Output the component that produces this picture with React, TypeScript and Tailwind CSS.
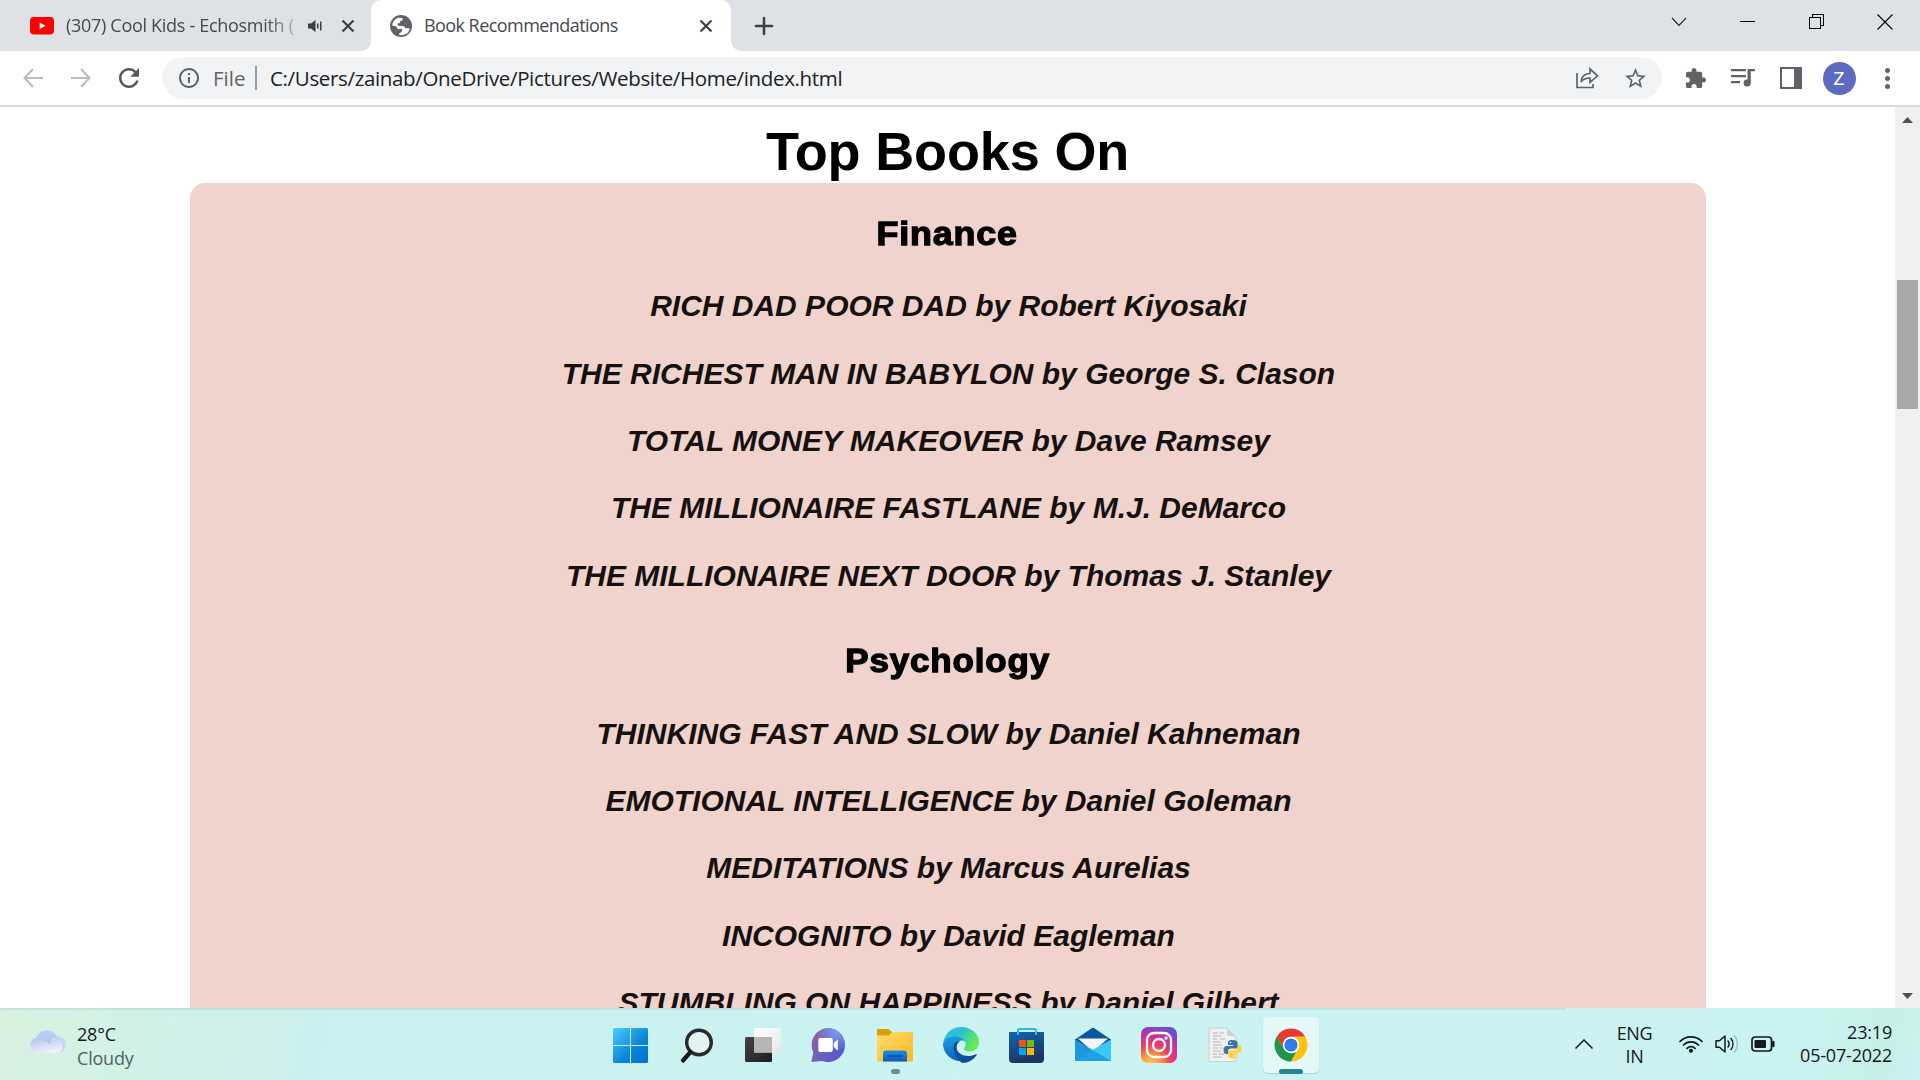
import React from "react";

const finance = [
  "RICH DAD POOR DAD by Robert Kiyosaki",
  "THE RICHEST MAN IN BABYLON by George S. Clason",
  "TOTAL MONEY MAKEOVER by Dave Ramsey",
  "THE MILLIONAIRE FASTLANE by M.J. DeMarco",
  "THE MILLIONAIRE NEXT DOOR by Thomas J. Stanley",
];
const psychology = [
  "THINKING FAST AND SLOW by Daniel Kahneman",
  "EMOTIONAL INTELLIGENCE by Daniel Goleman",
  "MEDITATIONS by Marcus Aurelias",
  "INCOGNITO by David Eagleman",
  "STUMBLING ON HAPPINESS by Daniel Gilbert",
];

function Cell({ children }: { children: React.ReactNode }) {
  return <div className="flex h-full w-12 shrink-0 items-center justify-center">{children}</div>;
}

function Material({ d, size = 27, color = "#5f6368" }: { d: string; size?: number; color?: string }) {
  return (
    <svg width={size} height={size} viewBox="0 0 24 24" fill={color} className="shrink-0">
      <path d={d} />
    </svg>
  );
}

function TabClose() {
  return (
    <svg width="14" height="14" viewBox="0 0 14 14" stroke="#3c4043" strokeWidth="2.2" className="shrink-0">
      <path d="M1.5 1.5l11 11M12.5 1.5l-11 11" />
    </svg>
  );
}

function TabStrip() {
  return (
    <div className="flex h-[51px] shrink-0 bg-[#dee1e6] text-[18px] text-[#45494d]">
      <div className="flex w-[371px] items-center pl-[30px]">
        <svg width="24" height="18" viewBox="0 0 24 18" className="shrink-0">
          <rect width="24" height="17.5" rx="4" fill="#f00" />
          <path d="M9.7 5.5v6.4l5.8-3.2z" fill="#fff" />
        </svg>
        <div className="ml-3 w-[232px] whitespace-nowrap tracking-[-0.3px] [mask-image:linear-gradient(to_right,black_85%,transparent_105%)]">
          (307) Cool Kids - Echosmith (
        </div>
        <svg width="16" height="14" viewBox="0 0 16 14" className="ml-[9px] shrink-0" fill="#3c4043">
          <path d="M1 4.5h3L8.5 1v12L4 9.5H1z" />
          <rect x="10" y="4.5" width="1.5" height="5" />
          <rect x="13" y="2.5" width="1.5" height="9" />
        </svg>
        <div className="ml-[18px] flex">
          <TabClose />
        </div>
      </div>
      <div className="relative flex w-[360px] items-center rounded-t-[10px] bg-white pl-[19px]">
        <div className="absolute bottom-0 -left-[10px] h-[10px] w-[10px] bg-[radial-gradient(circle_at_0_0,transparent_9.5px,white_10px)]" />
        <div className="absolute -right-[10px] bottom-0 h-[10px] w-[10px] bg-[radial-gradient(circle_at_100%_0,transparent_9.5px,white_10px)]" />
        <svg width="22" height="22" viewBox="2 2 20 20" className="shrink-0">
          <circle cx="12" cy="12" r="10" fill="#5f6368" />
          <path d="M4 11.5c.2-3.3 2.3-6 5.3-7.1l4 .3v2.2c-1.7 0-2.5 1-2.5 2.5h-2c0 1.5.5 2.5 1.8 2.5h3.2c1.6 0 2.2 1 2.2 2.2h4c-.4 3.3-3 5.9-6.5 6.100l-3 .1v-2c1.500 0 2.500-1 2.500-2.700v-.8H10c-1.200 0-2-.9-2-2.300z" fill="#fff" />
          <path d="M10.8 9.400h2.700V7.200c1.500 0 2.500-.8 2.700-2l2 1.500 1.600 3.600.2 3.500h-4c0-1.500-1-2.300-2.200-2.300h-2.200z" fill="#5f6368" />
        </svg>
        <span className="ml-[12px] w-[275px] whitespace-nowrap tracking-[-0.56px]">Book Recommendations</span>
        <TabClose />
      </div>
      <div className="ml-[23px] flex items-center">
        <svg width="20" height="20" viewBox="0 0 20 20" stroke="#3c4043" strokeWidth="2.6" strokeLinecap="round">
          <path d="M10 2v16M2 10h16" />
        </svg>
      </div>
      <div className="mb-[8px] ml-auto flex items-center">
        <div className="flex w-[68px] justify-center">
          <svg width="16" height="10" viewBox="0 0 16 10" fill="none" stroke="#222" strokeWidth="1.1">
            <path d="M1 1l7 7.500L15 1" />
          </svg>
        </div>
        <div className="flex w-[69px] justify-center">
          <div className="h-px w-[15px] bg-black" />
        </div>
        <div className="flex w-[69px] justify-center">
          <svg width="16" height="16" viewBox="0 0 16 16" fill="none" stroke="#000" shapeRendering="crispEdges">
            <path d="M.5 3.500h11v11h-11zM3.500 3.500v-3h11v11h-3" />
          </svg>
        </div>
        <div className="flex w-[69px] justify-center pr-px">
          <svg width="16" height="16" viewBox="0 0 16 16" stroke="#000" strokeWidth="1.1">
            <path d="M.5.5l15 15M15.500.5l-15 15" />
          </svg>
        </div>
      </div>
    </div>
  );
}

function Toolbar() {
  return (
    <div className="flex h-[56px] shrink-0 items-center border-b-2 border-[#dadbdc] bg-white pl-[9px]">
      <Cell>
        <svg width="20" height="20" viewBox="0 0 20 20" fill="none" stroke="#babcbe" strokeWidth="2.1">
          <path d="M20 10H1.500M10 1L1.500 10 10 19" />
        </svg>
      </Cell>
      <Cell>
        <svg width="20" height="20" viewBox="0 0 20 20" fill="none" stroke="#babcbe" strokeWidth="2.1">
          <path d="M0 10h18.500M10 1l8.500 9-8.500 9" />
        </svg>
      </Cell>
      <Cell>
        <Material
          color="#54585c"
          size={30}
          d="M17.650 6.350C16.200 4.900 14.210 4 12 4c-4.420 0-7.990 3.580-7.990 8s3.570 8 7.990 8c3.730 0 6.840-2.550 7.730-6h-2.080c-.820 2.330-3.040 4-5.650 4-3.310 0-6-2.690-6-6s2.690-6 6-6c1.660 0 3.140.690 4.220 1.780L13 11h7V4l-2.350 2.350z"
        />
      </Cell>
      <div className="ml-[9px] flex h-[42px] w-[1500px] items-center rounded-full bg-[#f1f3f4] pr-[3px] pl-[15px] text-[20.5px]">
        <Material
          size={24}
          d="M11 7h2v2h-2zm0 4h2v6h-2zm1-9C6.480 2 2 6.480 2 12s4.480 10 10 10 10-4.480 10-10S17.520 2 12 2zm0 18c-4.410 0-8-3.590-8-8s3.590-8 8-8 8 3.590 8 8-3.590 8-8 8z"
        />
        <span className="ml-[12px] w-[42px] text-[#5f6368]">File</span>
        <div className="h-6 w-[2px] bg-[#9a9da0]" />
        <span className="ml-[13px] whitespace-nowrap tracking-[-0.34px] text-[#202124]">
          C:/Users/zainab/OneDrive/Pictures/Website/Home/index.html
        </span>
        <div className="ml-auto flex">
          <Cell>
            <svg width="24" height="24" viewBox="0 0 24 24" fill="none" stroke="#5f6368" strokeWidth="1.7">
              <path d="M2 7v14.500h16V18" />
              <path d="M6 16c.5-5.500 4-8.500 9-8.500V3l7.500 6.800-7.500 6.500V12c-4 0-7 1-9 4z" />
            </svg>
          </Cell>
          <Cell>
            <Material
              size={25}
              d="M22 9.240l-7.190-.620L12 2 9.190 8.630 2 9.240l5.460 4.730L5.820 21 12 17.270 18.180 21l-1.630-7.030L22 9.240zM12 15.400l-3.760 2.270 1-4.280-3.320-2.880 4.380-.380L12 6.100l1.710 4.040 4.380.380-3.320 2.880 1 4.280L12 15.400z"
            />
          </Cell>
        </div>
      </div>
      <div className="ml-[9px] flex items-center">
        <Cell>
          <Material
            size={23}
            d="M20.500 11H19V7c0-1.100-.9-2-2-2h-4V3.500C13 2.120 11.880 1 10.500 1S8 2.120 8 3.500V5H4c-1.100 0-1.990.9-1.990 2v3.800H3.500c1.490 0 2.700 1.210 2.700 2.700s-1.210 2.700-2.700 2.700H2V20c0 1.100.9 2 2 2h3.800v-1.500c0-1.490 1.210-2.700 2.700-2.700s2.700 1.210 2.700 2.700V22H17c1.100 0 2-.9 2-2v-4h1.500c1.380 0 2.500-1.120 2.500-2.500S21.880 11 20.500 11z"
          />
        </Cell>
        <Cell>
          <svg width="24" height="20" viewBox="0 0 24 20" fill="#5f6368">
            <path d="M0 1h15v2.200H0zM0 7h15v2.200H0zM0 13h9v2.200H0zM16.500 1H24v2.200h-4.200V15a3.600 3.600 0 1 1-3.300-3.600z" />
          </svg>
        </Cell>
        <Cell>
          <div className="flex h-[22px] w-[22px] justify-end border-[2.5px] border-[#5f6368]">
            <div className="w-[6px] bg-[#5f6368]" />
          </div>
        </Cell>
        <Cell>
          <div className="flex h-[33px] w-[33px] items-center justify-center rounded-full bg-[#5c6bc0] font-[Roboto] text-[19px] leading-none text-white">
            Z
          </div>
        </Cell>
        <Cell>
          <div className="flex flex-col gap-[3px]">
            <div className="h-[5px] w-[5px] rounded-full bg-[#5f6368]" />
            <div className="h-[5px] w-[5px] rounded-full bg-[#5f6368]" />
            <div className="h-[5px] w-[5px] rounded-full bg-[#5f6368]" />
          </div>
        </Cell>
      </div>
    </div>
  );
}

function Section({ title, titleClass, books }: { title: string; titleClass: string; books: string[] }) {
  return (
    <section className="w-full">
      <div className="flex h-[89.7px] items-end justify-center pb-[19px]">
        <h2 className={`${titleClass} text-[33px] leading-10 font-bold tracking-[0.8px] text-black [-webkit-text-stroke:1.3px_black]`}>
          {title}
        </h2>
      </div>
      {books.map((b) => (
        <div key={b} className="flex h-[67.3px] items-center justify-center pl-[2px]">
          <p className="text-[30px] leading-[34px] font-bold whitespace-nowrap text-[#16110f] italic">{b}</p>
        </div>
      ))}
    </section>
  );
}

function Page() {
  return (
    <div className="flex min-h-0 flex-1 bg-white">
      <main className="flex min-w-0 flex-1 flex-col items-center overflow-hidden pt-[14px] font-['Liberation_Sans',Arial,sans-serif]">
        <h1 className="h-[62px] shrink-0 text-[54px] leading-[60px] font-bold tracking-[-0.15px] text-black">Top Books On</h1>
        <div className="flex w-[1516px] shrink-0 flex-col gap-[1.2px] rounded-[15px] bg-[#f0d3cd]">
          <Section title="Finance" titleClass="scale-x-[1.085]" books={finance} />
          <Section title="Psychology" titleClass="scale-x-[1.06]" books={psychology} />
        </div>
      </main>
      <div className="flex w-[25px] shrink-0 flex-col items-center bg-[#f0f0f0] pt-[10px] pb-[9px]">
        <svg width="11" height="6" viewBox="0 0 11 6" fill="#505050">
          <path d="M5.500 0L11 6H0z" />
        </svg>
        <div className="mt-[157px] h-[129px] w-[21px] bg-[#a8a8a8]" />
        <svg width="11" height="6" viewBox="0 0 11 6" fill="#505050" className="mt-auto">
          <path d="M5.500 6L0 0h11z" />
        </svg>
      </div>
    </div>
  );
}

function AppIcon({ children }: { children: React.ReactNode }) {
  return (
    <svg width="36" height="36" viewBox="0 0 36 36" className="overflow-visible">
      {children}
    </svg>
  );
}

function Stops({ id, from, to, mid, x2 = 1, y2 = 1 }: { id: string; from: string; to: string; mid?: string; x2?: number; y2?: number }) {
  return (
    <linearGradient id={id} x1="0" y1="0" x2={x2} y2={y2}>
      <stop offset="0" stopColor={from} />
      {mid && <stop offset=".5" stopColor={mid} />}
      <stop offset="1" stopColor={to} />
    </linearGradient>
  );
}

const icons: React.ReactNode[] = [
  <AppIcon key="start">
    <defs>
      <linearGradient id="win" gradientUnits="userSpaceOnUse" x1="0" y1="0" x2="36" y2="36">
        <stop offset="0" stopColor="#4cd0ff" />
        <stop offset=".6" stopColor="#0a84d8" />
        <stop offset="1" stopColor="#0070d0" />
      </linearGradient>
    </defs>
    <path fill="url(#win)" d="M1.500 1H17v17H0V2.500A1.500 1.500 0 0 1 1.500 1zM18 1h15.500A1.500 1.500 0 0 1 35 2.500V18H18zM0 19h17v17H1.500A1.500 1.500 0 0 1 0 34.500zM18 19h17v15.500a1.500 1.500 0 0 1-1.500 1.500H18z" />
  </AppIcon>,
  <AppIcon key="search">
    <circle cx="20" cy="15.500" r="12.300" fill="#e0f4f4" stroke="#2b2a2a" strokeWidth="3.400" />
    <path d="M11.500 25L4 33.500" stroke="#1c1b1b" strokeWidth="4.200" strokeLinecap="round" />
  </AppIcon>,
  <AppIcon key="tasks">
    <defs>
      <Stops id="tv" from="#444" to="#1d1d1d" />
      <Stops id="tw" from="#fff" to="#e4e6e6" />
    </defs>
    <rect y="10" width="27" height="25" rx="1.500" fill="url(#tv)" />
    <rect x="9" y="1" width="27" height="24.500" rx="1" fill="url(#tw)" />
    <path d="M9 10h18v15.500H9z" fill="#b5b5b5" />
  </AppIcon>,
  <AppIcon key="chat">
    <defs>
      <linearGradient id="chat" x1="0" y1=".3" x2="1" y2=".7">
        <stop offset="0" stopColor="#94629f" />
        <stop offset=".5" stopColor="#655dc1" />
        <stop offset="1" stopColor="#5558cc" />
      </linearGradient>
      <radialGradient id="chath" cx=".75" cy=".1" r=".6">
        <stop offset="0" stopColor="#7aa0ee" />
        <stop offset="1" stopColor="#7aa0ee" stopOpacity="0" />
      </radialGradient>
    </defs>
    <g transform="translate(-.7 0)">
      <path d="M18 1a17 17 0 1 1-6 33L1 35l2-9.500A17 17 0 0 1 18 1z" fill="url(#chat)" />
      <path d="M18 1a17 17 0 1 1-6 33L1 35l2-9.500A17 17 0 0 1 18 1z" fill="url(#chath)" />
      <rect x="8" y="11" width="14.500" height="14" rx="2" fill="#fff" />
      <path d="M23.500 16l4-3.500v11l-4-3.500z" fill="#fff" />
    </g>
  </AppIcon>,
  <AppIcon key="files">
    <defs>
      <Stops id="fold" from="#ffdc6f" to="#fcb91a" />
      <Stops id="tray" from="#1b8fe0" to="#0a5cba" x2={0} />
    </defs>
    <path d="M1 2h10.500l3.500 3h20a1 1 0 0 1 1 1v5H0V3a1 1 0 0 1 1-1z" fill="#de9c08" />
    <path d="M0 8.500h11.500L15 5h20a1 1 0 0 1 1 1v27.500a1 1 0 0 1-1 1H1a1 1 0 0 1-1-1z" fill="url(#fold)" />
    <path d="M6 34.500v-8a3 3 0 0 1 3-3h18a3 3 0 0 1 3 3v8z" fill="url(#tray)" />
    <path d="M11 29h14" stroke="#0a4a94" strokeWidth="1.500" strokeLinecap="round" />
  </AppIcon>,
  <AppIcon key="edge">
    <defs>
      <Stops id="e1" from="#35b8ef" mid="#2bc3c9" to="#66eb50" y2={0.5} />
      <Stops id="e2" from="#1a9fe0" to="#0b63c4" x2={0} />
    </defs>
    <path d="M0 17C1 7 8.500 0 18 0c10.500 0 18 7 18 15 0 6-4.500 9.500-9.500 9.500-3.500 0-5.500-1.200-5.500-2.700 0-1.200 1.700-1.900 1.700-4.600C22.700 12.700 18 9 11.500 9 6 9 1.500 12.500 0 17z" fill="url(#e1)" />
    <path d="M0 18.500C0 13 5 9 11.500 9 17 9 21 11.500 22.300 15c-1.500-1.500-3.600-1.800-5.300-1-2 1-3.500 3.500-3.500 6.500 0 6.500 5 12 13 11.500A18 18 0 0 1 0 18.500z" fill="url(#e2)" />
    <path d="M11 17c-2 6 1 13.500 8 18.900 5.500.3 11-2.300 14.700-7.900.3-.6-.2-1.200-.9-.8C25.500 31 14 28.500 13.500 20.500c0-2.700 1.300-5 3-6.300-2.500-.2-4.500.8-5.500 2.800z" fill="#0d4f98" />
  </AppIcon>,
  <AppIcon key="store">
    <defs>
      <Stops id="st" from="#0e66b4" to="#1d3560" x2={0.3} />
    </defs>
    <path d="M9 8V3.500A1.500 1.500 0 0 1 10.500 2h15A1.500 1.500 0 0 1 27 3.500V8" fill="none" stroke="#2cb9ec" strokeWidth="2" />
    <path d="M0 5h35v27a4 4 0 0 1-4 4H4a4 4 0 0 1-4-4z" fill="url(#st)" />
    <path d="M9 8V5M27 8V5" fill="none" stroke="#2cb9ec" strokeWidth="2" />
    <path d="M10 13h7v7h-7z" fill="#f25022" />
    <path d="M18 13h7v7h-7z" fill="#7fba00" />
    <path d="M10 21h7v7h-7z" fill="#00a4ef" />
    <path d="M18 21h7v7h-7z" fill="#ffb900" />
  </AppIcon>,
  <AppIcon key="mail">
    <path d="M0 12.500L16.700 1.300a2.200 2.200 0 0 1 2.600 0L36 12.500V20H0z" fill="#0b57a4" />
    <path d="M3 11.500h30L20 23h-4z" fill="#f4f4f6" />
    <path d="M0 12.500L36 34H1a1 1 0 0 1-1-1z" fill="#1c98e0" />
    <path d="M36 12.500V33a1 1 0 0 1-1 1L17.500 23z" fill="#3bc8f5" />
    <path d="M17.500 23L36 34H1z" fill="#1f9fe6" />
  </AppIcon>,
  <AppIcon key="instagram">
    <defs>
      <radialGradient id="ig" cx=".28" cy="1.050" r="1.100">
        <stop offset="0" stopColor="#ffd35a" />
        <stop offset=".25" stopColor="#fb9a3c" />
        <stop offset=".5" stopColor="#ee3f5c" />
        <stop offset=".75" stopColor="#c92fa0" />
        <stop offset="1" stopColor="#6a4fd0" />
      </radialGradient>
    </defs>
    <rect width="36" height="36" rx="7" fill="url(#ig)" />
    <g fill="none" stroke="#fff" strokeWidth="2.300">
      <rect x="6" y="6" width="24" height="24" rx="7" />
      <circle cx="18" cy="18" r="6" />
    </g>
    <circle cx="25" cy="11" r="1.700" fill="#fff" />
  </AppIcon>,
  <AppIcon key="python">
    <path d="M2 1h18l9 9v24.500H2z" fill="#f0f0ee" stroke="#c2c8c8" strokeWidth=".8" />
    <path d="M20 1l9 9-9-1.500z" fill="#d2d4d4" />
    <path d="M6 6h5m2 0h4M6 9h8M6 12h4m3 0h5M6 15h8M6 18h9M6 21h5m2 0h3M6 24h8M6 27h4m2 0h5M6 30h9" stroke="#b4b7b7" strokeWidth="1" />
    <path d="M25.500 13c-4 0-4.500 1.300-4.500 3v2h5v1h-6.500c-2 0-3 1.700-3 4s1 4 2.700 4H21v-2.500c0-1.700 1.300-3 3-3h4.500c1.300 0 2.200-1 2.200-2.300V16c0-2-1.500-3-5.200-3z" fill="#3a75a8" />
    <path d="M26 31.500c4 0 4.500-1.500 4.500-3v-2h-5v-1H32c1.800 0 2.500-1.700 2.500-4s-1-3.700-2.500-3.700h-1.300V20c0 1.700-1.200 3-2.900 3h-4.300c-1.500 0-2.500 1-2.500 2.500v3c0 2 2 3 5 3z" fill="#ffd040" />
    <circle cx="23.500" cy="15.500" r=".8" fill="#fff" />
    <circle cx="28.500" cy="29" r=".8" fill="#fff" />
  </AppIcon>,
  <AppIcon key="chrome">
    <path d="M18 1.500a16.500 16.500 0 0 1 14.300 8.300H18L10.900 22 3.700 9.800A16.500 16.500 0 0 1 18 1.500z" fill="#e33b2e" />
    <path d="M32.300 9.800A16.500 16.500 0 0 1 18 34.500l7.100-12.400 0-8.200-4-4.100z" fill="#fdc30f" />
    <path d="M3.700 9.800l7.200 12.300 7.100 4.100 5.200-.9L18 34.500A16.500 16.500 0 0 1 3.700 9.800z" fill="#219447" />
    <circle cx="18" cy="18" r="8.200" fill="#fff" />
    <circle cx="18" cy="18" r="6.600" fill="#2e7cf0" />
  </AppIcon>,
];

function Taskbar() {
  return (
    <div className="flex h-[72px] shrink-0 bg-[linear-gradient(100deg,#d9f1de_0%,#d0f2e9_9%,#caf0ef_17%,#caf3f2_50%,#cbf2f1_85%,#c8f4f2_93%,#c6efe8_98%,#caf3f2_100%)] text-[18px]">
      <div className="flex w-[598px] border-t-2 border-[#bfe2df] pt-[12px] pl-[30px]">
        <svg width="36" height="24" viewBox="0 0 36 24" className="mt-[8px] shrink-0">
          <defs>
            <Stops id="cl1" from="#c0cff4" to="#a5bdef" x2={0} />
            <Stops id="cl2" from="#b2c3eb" to="#eef0fb" x2={0.5} />
          </defs>
          <circle cx="17" cy="11.500" r="11.200" fill="url(#cl1)" />
          <circle cx="28" cy="14.500" r="8" fill="#cbd5f0" />
          <path d="M7.500 23A7.500 7.500 0 1 1 13 10.500c3 .5 5 2 6 4 2-3 5.500-5 9-4.500A7 7 0 0 1 28 23z" fill="url(#cl2)" />
        </svg>
        <div className="ml-[11px] leading-6 tracking-[-0.2px] text-[#15191c]">
          <div>28°C</div>
          <div className="text-[#4f6365]">Cloudy</div>
        </div>
      </div>
      <div className="flex border-t-2 border-[#bfe6e4]">
        {icons.map((icon, i) => (
          <div key={i} className="relative flex w-[66px] items-center justify-center">
            {i === 10 && <div className="absolute top-[7px] left-[5px] h-[56px] w-[56px] rounded-[5px] bg-[#e4f8f8] shadow-[0_1px_1px_#abd3d5]" />}
            <div className="relative">{icon}</div>
            {i === 4 && <div className="absolute bottom-[6px] left-[28.500px] h-[5px] w-[9px] rounded-full bg-[#738d8d]" />}
            {i === 10 && <div className="absolute bottom-[6px] left-[21px] h-[5px] w-[24px] rounded-full bg-[#268494]" />}
          </div>
        ))}
      </div>
      <div className="h-[2px] w-[242px] bg-[#bfe6e4]" />
      <div className="flex flex-1 pl-[9px] text-[#14191b]">
        <svg width="18" height="10" viewBox="0 0 18 10" fill="none" stroke="#14191b" strokeWidth="1.500" className="mt-[31px]">
          <path d="M.5 9.500L9 1l8.500 8.500" />
        </svg>
        <div className="ml-[15px] w-[53px] pt-[14px] text-center leading-[23px] tracking-[-0.4px]">
          <div>ENG</div>
          <div>IN</div>
        </div>
        <div className="mt-[26px] ml-[18px] flex h-5 items-center gap-3">
          <svg width="24" height="18" viewBox="0 0 24 18" fill="none" stroke="#14191b" strokeWidth="1.700" strokeLinecap="round">
            <path d="M1 6.500a15.500 15.500 0 0 1 22 0M4.500 10a10.600 10.600 0 0 1 15 0M8 13.300a5.700 5.700 0 0 1 8 0" />
            <circle cx="12" cy="15.700" r="1.200" fill="#14191b" />
          </svg>
          <svg width="24" height="20" viewBox="0 0 24 20" fill="none" stroke="#14191b" strokeWidth="1.500" strokeLinecap="round" strokeLinejoin="round">
            <path d="M1 6.800h3.500L10 2v16l-5.500-4.800H1zM13 7a5 5 0 0 1 0 6M16 4.500a9 9 0 0 1 0 11" />
            <path d="M19.500 1.800a13 13 0 0 1 0 16.400" stroke="#9fc0c1" />
          </svg>
          <svg width="24" height="16" viewBox="0 0 24 16" fill="none" stroke="#14191b" strokeWidth="1.700">
            <rect x="1" y="1" width="19.500" height="14" rx="3" />
            <rect x="3.500" y="4" width="11.500" height="8" rx="1" fill="#14191b" stroke="none" />
            <path d="M22.300 6v4" strokeWidth="2.500" strokeLinecap="round" />
          </svg>
        </div>
        <div className="ml-auto pt-[13px] pr-[28px] text-right leading-[23px] tracking-[-0.2px]">
          <div>23:19</div>
          <div>05-07-2022</div>
        </div>
      </div>
    </div>
  );
}

export default function App() {
  return (
    <div className="flex h-[1080px] w-[1920px] flex-col overflow-hidden bg-white font-['Open_Sans','Noto_Sans',sans-serif]">
      <TabStrip />
      <Toolbar />
      <Page />
      <Taskbar />
    </div>
  );
}
